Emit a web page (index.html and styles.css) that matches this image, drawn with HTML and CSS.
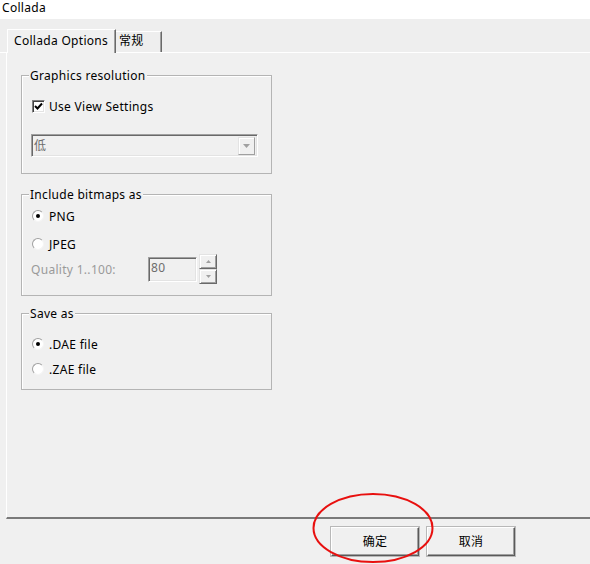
FILE: index.html
```html
<!DOCTYPE html>
<html lang="zh">
<head>
<meta charset="utf-8">
<title>Collada</title>
<link rel="stylesheet" href="styles.css">
</head>
<body>
<div class="titlebar">Collada</div>

<div class="tabs">
  <div class="tab active">Collada Options</div>
  <div class="tab">常规</div>
</div>

<div class="panel">
  <div class="group g-res">
    <span class="caption">Graphics resolution</span>
    <div class="row row-check">
      <span class="checkbox"><svg width="9" height="9" viewBox="0 0 9 9"><polyline points="1,4 3.5,6.5 8,1.5" fill="none" stroke="#000" stroke-width="2"/></svg></span>
      <span class="txt">Use View Settings</span>
    </div>
    <div class="combo">
      <span class="combo-text">低</span>
      <span class="combo-btn"><svg width="7" height="4" viewBox="0 0 7 4"><polygon points="0,0 7,0 3.5,4" fill="#a0a0a0"/></svg></span>
    </div>
  </div>

  <div class="group g-bmp">
    <span class="caption">Include bitmaps as</span>
    <div class="row row-png"><span class="radio checked"></span><span class="txt">PNG</span></div>
    <div class="row row-jpeg"><span class="radio"></span><span class="txt">JPEG</span></div>
    <div class="row row-quality">
      <span class="txt muted quality-label">Quality 1..100:</span>
      <span class="field">80</span>
      <span class="spin">
        <span class="spin-btn"><svg width="5" height="3" viewBox="0 0 5 3"><polygon points="0,3 5,3 2.5,0" fill="#a0a0a0"/></svg></span>
        <span class="spin-btn"><svg width="5" height="3" viewBox="0 0 5 3"><polygon points="0,0 5,0 2.5,3" fill="#a0a0a0"/></svg></span>
      </span>
    </div>
  </div>

  <div class="group g-save">
    <span class="caption">Save as</span>
    <div class="row row-dae"><span class="radio checked"></span><span class="txt">.DAE file</span></div>
    <div class="row row-zae"><span class="radio"></span><span class="txt">.ZAE file</span></div>
  </div>
</div>

<div class="footer">
  <button class="btn">确定</button>
  <button class="btn">取消</button>
  <svg class="mark" width="124" height="74" viewBox="0 0 124 74"><ellipse cx="62" cy="36" rx="59.5" ry="34" fill="none" stroke="#e8100f" stroke-width="2"/></svg>
</div>
</body>
</html>
```

FILE: styles.css
```css
* { box-sizing: border-box; }

html, body {
  margin: 0;
  padding: 0;
  width: 590px;
  height: 564px;
  overflow: hidden;
}

body {
  background: #f0f0f0;
  font-family: "Noto Sans", "Noto Sans CJK SC", sans-serif;
  font-size: 12px;
  line-height: 16px;
  letter-spacing: 0.3px;
  color: #000;
}

/* window caption strip */
.titlebar {
  height: 19px;
  background: #fff;
  padding-left: 2px;
  line-height: 16px;
}

/* tab strip */
.tabs {
  height: 34px;
  display: flex;
  align-items: flex-end;
  padding-left: 7px;
  background: #eeeeee;
  border-bottom: 1px solid #fff;
}

.tab {
  background: #f0f0f0;
  white-space: nowrap;
}

.tab.active {
  width: 109px;
  height: 24px;
  margin-bottom: -1px;
  padding: 3px 0 0 6px;
  border-left: 1px solid #fff;
  border-top: 1px solid #fff;
  border-right: 1px solid #696969;
  box-shadow: inset -1px 0 #a0a0a0;
}

.tab:not(.active) {
  width: 46px;
  height: 21px;
  padding: 1px 0 0 3px;
  border-top: 1px solid #fff;
  border-right: 1px solid #696969;
  box-shadow: inset -1px 0 #a0a0a0;
  background: #eeeeee;
}

/* page body of the tab control */
.panel {
  height: 466px;
  margin-left: 6px;
  margin-right: -6px;
  border-left: 1px solid #fff;
  border-bottom: 2px solid #7a7a7a;
  padding-top: 22px;
  display: flex;
  flex-direction: column;
}

.group {
  position: relative;
  width: 251px;
  margin-left: 14px;
  border: 1px solid #b4b4b4;
  box-shadow: inset 1px 1px #fff;
  padding-left: 9px;
  display: flex;
  flex-direction: column;
}

.caption {
  position: absolute;
  top: -8px;
  left: 7px;
  padding: 0 1px;
  background: #f0f0f0;
  white-space: nowrap;
}

.g-res { height: 99px; }
.g-bmp { height: 102px; margin-top: 20px; }
.g-save { height: 77px; margin-top: 17px; }

.row {
  display: flex;
  align-items: center;
  height: 20px;
  white-space: nowrap;
}

/* labels sit a touch low, like the native dialog font */
.txt { padding-top: 2px; }

.row-check { margin-top: 20px; }
.row-png { margin-top: 11px; }
.row-jpeg { margin-top: 8px; }
.row-quality { height: 30px; }
.row-dae { margin-top: 20px; }
.row-zae { margin-top: 5px; }

/* checkbox */
.checkbox {
  width: 13px;
  height: 13px;
  margin: 0 4px 0 1px;
  background: #fff;
  border: 1px solid;
  border-color: #808080 #fff #fff #808080;
  box-shadow: inset 1px 1px #404040, inset -1px -1px #e3e3e3;
  display: flex;
  align-items: center;
  justify-content: center;
}

/* radio buttons */
.radio {
  width: 12px;
  height: 12px;
  margin: 0 5px 0 1px;
  border-radius: 50%;
  background: #fff;
  border: 1px solid;
  border-color: #a0a0a0 #f4f4f4 #f4f4f4 #a0a0a0;
  position: relative;
}

.radio.checked::after {
  content: "";
  position: absolute;
  left: 3px;
  top: 3px;
  width: 4px;
  height: 4px;
  border-radius: 50%;
  background: #000;
}

/* disabled drop-down */
.combo {
  margin-top: 18px;
  width: 227px;
  height: 23px;
  background: #f0f0f0;
  border: 1px solid;
  border-color: #a0a0a0 #fff #fff #a0a0a0;
  box-shadow: inset 1px 1px #696969, inset -1px -1px #e3e3e3;
  display: flex;
  align-items: center;
  padding: 2px;
}

.combo-text {
  flex: 1;
  color: #6d6d6d;
  padding-top: 1px;
}

.combo-btn {
  width: 17px;
  height: 18px;
  background: #f0f0f0;
  border: 1px solid;
  border-color: #e3e3e3 #a0a0a0 #a0a0a0 #e3e3e3;
  box-shadow: inset 1px 1px #fff;
  display: flex;
  align-items: center;
  justify-content: center;
}

/* quality spinner */
.muted { color: #9a9a9a; }

.quality-label { width: 117px; }

.field {
  width: 49px;
  height: 25px;
  border: 1px solid;
  border-color: #a0a0a0 #fff #fff #a0a0a0;
  box-shadow: inset 1px 1px #696969, inset -1px -1px #e3e3e3;
  color: #6d6d6d;
  padding: 2px 0 0 2px;
  line-height: 16px;
}

.spin {
  margin-left: 2px;
  width: 18px;
  height: 30px;
  display: flex;
  flex-direction: column;
}

.spin-btn {
  flex: 1;
  background: #f0f0f0;
  border: 1px solid;
  border-color: #e3e3e3 #696969 #696969 #e3e3e3;
  box-shadow: inset 1px 1px #fff, inset -1px -1px #a0a0a0;
  display: flex;
  align-items: center;
  justify-content: center;
}

/* dialog buttons */
.footer {
  position: relative;
  height: 45px;
  display: flex;
  justify-content: flex-end;
  align-items: flex-start;
  gap: 8px;
  padding: 8px 75px 0 0;
}

.btn {
  width: 88px;
  height: 29px;
  background: #f0f0f0;
  font: inherit;
  letter-spacing: inherit;
  color: #000;
  border: 1px solid;
  border-color: #fff #5a5a5a #5a5a5a #fff;
  box-shadow: inset -1px -1px #a0a0a0, 0 0 0 1px #b8b8b8;
  padding: 0;
  line-height: 16px;
}

.mark {
  position: absolute;
  left: 311px;
  top: -27px;
}
```
